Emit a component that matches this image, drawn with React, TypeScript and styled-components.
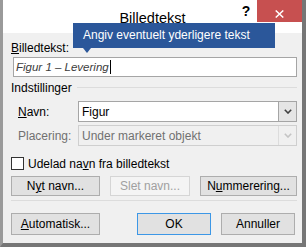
import styled, { createGlobalStyle } from "styled-components"

const Global = createGlobalStyle`
  body {
    margin: 0;
    font-family: "Liberation Sans", Arial, sans-serif;
    font-size: 12px;
    color: #000;
    background: #fff;
  }
`

const Window = styled.div`
  position: relative;
  width: 306px;
  height: 247px;
  box-sizing: border-box;
  border-left: 3px solid #9a9a9a;
  border-right: 4px solid #767676;
  border-bottom: 4px solid #767676;
  background: #f0f0f0;
  display: flex;
  flex-direction: column;
  overflow: hidden;
`

const TitleBar = styled.div`
  height: 33px;
  background: #fff;
  display: grid;
  grid-template-columns: 1fr auto 1fr;
`

const Title = styled.div`
  grid-column: 2;
  margin-top: 8px;
  line-height: 20px;
  font-size: 14.5px;
`

const Controls = styled.div`
  grid-column: 3;
  justify-self: end;
  display: flex;
  align-items: flex-start;
`

const HelpButton = styled.div`
  width: 22px;
  height: 22px;
  box-sizing: border-box;
  padding-top: 4px;
  text-align: center;
  font-weight: bold;
  font-size: 14px;
  line-height: 14px;
`

const CloseButton = styled.div`
  width: 45px;
  height: 22px;
  background: #c75050;
  display: flex;
  align-items: center;
  justify-content: center;
  padding-top: 5px;
  box-sizing: border-box;
`

const Tooltip = styled.div`
  position: absolute;
  left: 70px;
  top: 23px;
  width: 202px;
  height: 25px;
  box-sizing: border-box;
  padding-left: 10px;
  background: #2b579a;
  color: #fff;
  font-size: 12px;
  line-height: 25px;
  white-space: nowrap;
  &::after {
    content: "";
    position: absolute;
    left: 10px;
    top: 100%;
    border-left: 4px solid transparent;
    border-right: 4px solid transparent;
    border-top: 5px solid #2b579a;
  }
`

const Body = styled.div`
  flex: 1;
  display: flex;
  flex-direction: column;
  padding: 8px 5px 0 8px;
`

const Label = styled.div<{ $indent?: number; $disabled?: boolean }>`
  line-height: 14px;
  padding-left: ${(p) => p.$indent ?? 0}px;
  color: ${(p) => (p.$disabled ? "#707070" : "#000")};
  white-space: nowrap;
`

const Key = styled.span`
  text-decoration: underline;
`

const TextInput = styled.div`
  margin: 2px 0 0 2px;
  height: 20px;
  box-sizing: border-box;
  border: 1px solid #a5a5a5;
  background: #fff;
  display: flex;
  align-items: center;
  padding-left: 2px;
  font-style: italic;
  font-size: 11.5px;
  color: #3c3c3c;
`

const Caret = styled.span`
  display: inline-block;
  width: 1px;
  height: 14px;
  margin-left: 1px;
  background: #000;
`

const GroupHeader = styled.div`
  margin-top: 4px;
  height: 14px;
  display: flex;
  align-items: center;
  gap: 5px;
`

const GroupLine = styled.div`
  flex: 1;
  height: 1px;
  margin-top: -1px;
  background: #dcdcdc;
`

const Fields = styled.div`
  margin-top: 6px;
  display: grid;
  grid-template-columns: 67px 1fr;
  grid-auto-rows: 21px;
  row-gap: 3px;
  align-items: center;
`

const Combo = styled.div<{ $disabled?: boolean }>`
  height: 21px;
  box-sizing: border-box;
  border: 1px solid ${(p) => (p.$disabled ? "#cfcfcf" : "#a5a5a5")};
  background: ${(p) => (p.$disabled ? "#f0f0f0" : "#fff")};
  color: ${(p) => (p.$disabled ? "#707070" : "#000")};
  display: flex;
  align-items: center;
`

const ComboText = styled.div`
  flex: 1;
  padding-left: 3px;
  white-space: nowrap;
`

const ComboArrow = styled.div<{ $disabled?: boolean }>`
  width: 17px;
  align-self: stretch;
  border-left: 1px solid ${(p) => (p.$disabled ? "#dcdcdc" : "#a5a5a5")};
  background: ${(p) => (p.$disabled ? "#f0f0f0" : "#e5e5e5")};
  display: flex;
  align-items: center;
  justify-content: center;
`

const CheckRow = styled.div`
  margin-top: 11px;
  height: 13px;
  display: flex;
  align-items: center;
  gap: 4px;
`

const CheckBox = styled.div`
  width: 13px;
  height: 13px;
  box-sizing: border-box;
  border: 1px solid #333;
  background: #fff;
`

const ButtonRow = styled.div`
  margin-top: 6px;
  display: flex;
  justify-content: space-between;
`

const Button = styled.div<{ $w: number; $disabled?: boolean; $default?: boolean }>`
  width: ${(p) => p.$w}px;
  height: ${(p) => (p.$default !== undefined ? 22 : 20)}px;
  box-sizing: border-box;
  border: 1px solid
    ${(p) => (p.$disabled ? "#d5d5d5" : p.$default ? "#3c97e6" : "#adadad")};
  background: ${(p) => (p.$disabled ? "#f4f4f4" : "#e1e1e1")};
  color: ${(p) => (p.$disabled ? "#a0a0a0" : "#000")};
  display: flex;
  align-items: center;
  justify-content: center;
  white-space: nowrap;
`

const Separator = styled.div`
  margin-top: 4px;
  height: 1px;
  background: #dcdcdc;
`

const FooterRow = styled.div`
  margin-top: 12px;
  margin-right: 2px;
  display: flex;
  gap: 10px;
`

const Spacer = styled.div`
  flex: 1;
`

function Chevron({ color }: { color: string }) {
  return (
    <svg width="8" height="5" viewBox="0 0 8 5">
      <path d="M0.8 0.8 L4 4 L7.2 0.8" fill="none" stroke={color} strokeWidth="1.6" />
    </svg>
  )
}

export default function App() {
  return (
    <>
      <Global />
      <Window>
        <TitleBar>
          <Title>Billedtekst</Title>
          <Controls>
            <HelpButton>?</HelpButton>
            <CloseButton>
              <svg width="9" height="8" viewBox="0 0 9 8">
                <path d="M0.7 0.5 L8.3 7.5 M8.3 0.5 L0.7 7.5" stroke="#fff" strokeWidth="1.5" />
              </svg>
            </CloseButton>
          </Controls>
        </TitleBar>
        <Body>
          <Label>
            <Key>B</Key>illedtekst:
          </Label>
          <TextInput>
            Figur 1 – Levering<Caret />
          </TextInput>
          <GroupHeader>
            <span>Indstillinger</span>
            <GroupLine />
          </GroupHeader>
          <Fields>
            <Label $indent={7}>
              <Key>N</Key>avn:
            </Label>
            <Combo>
              <ComboText>Figur</ComboText>
              <ComboArrow>
                <Chevron color="#404040" />
              </ComboArrow>
            </Combo>
            <Label $indent={7} $disabled>
              Placering:
            </Label>
            <Combo $disabled>
              <ComboText>Under markeret objekt</ComboText>
              <ComboArrow $disabled>
                <Chevron color="#c4c4c4" />
              </ComboArrow>
            </Combo>
          </Fields>
          <CheckRow>
            <CheckBox />
            <span>
              Udelad na<Key>v</Key>n fra billedtekst
            </span>
          </CheckRow>
          <ButtonRow>
            <Button $w={89}>
              N<Key>y</Key>t navn...
            </Button>
            <Button $w={80} $disabled>
              Slet navn...
            </Button>
            <Button $w={97}>
              N<Key>u</Key>mmerering...
            </Button>
          </ButtonRow>
          <Separator />
          <FooterRow>
            <Button $w={89} $default={false}>
              <Key>A</Key>utomatisk...
            </Button>
            <Spacer />
            <Button $w={74} $default>
              OK
            </Button>
            <Button $w={74} $default={false}>
              Annuller
            </Button>
          </FooterRow>
        </Body>
        <Tooltip>Angiv eventuelt yderligere tekst</Tooltip>
      </Window>
    </>
  )
}
